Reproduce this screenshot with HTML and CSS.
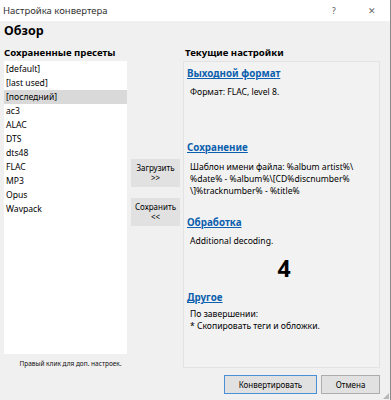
FILE: index.html
```html
<!DOCTYPE html>
<html lang="ru">
<head>
<meta charset="utf-8">
<title>Настройка конвертера</title>
<link rel="stylesheet" href="styles.css">
</head>
<body>
<div class="window">
  <div class="titlebar">
    <span class="title">Настройка конвертера</span>
    <span class="tb-help">?</span>
    <span class="tb-close">✕</span>
  </div>
  <div class="content">
    <div class="page-title">Обзор</div>
    <div class="main">
      <div class="left">
        <div class="col-title">Сохраненные пресеты</div>
        <ul class="list">
          <li>[default]</li>
          <li>[last used]</li>
          <li class="sel">[последний]</li>
          <li>ac3</li>
          <li>ALAC</li>
          <li>DTS</li>
          <li>dts48</li>
          <li>FLAC</li>
          <li>MP3</li>
          <li>Opus</li>
          <li>Wavpack</li>
        </ul>
        <div class="hint">Правый клик для доп. настроек.</div>
      </div>
      <div class="mid">
        <button class="btn mbtn load">Загрузить<br>&gt;&gt;</button>
        <button class="btn mbtn save">Сохранить<br>&lt;&lt;</button>
      </div>
      <div class="right">
        <div class="col-title rtitle">Текущие настройки</div>
        <div class="panel">
          <a class="sec h-format">Выходной формат</a>
          <p class="txt t-format">Формат: FLAC, level 8.</p>
          <a class="sec h-save">Сохранение</a>
          <p class="txt t-save">Шаблон имени файла: %album artist%\<br>%date% - %album%\[CD%discnumber%<br>\]%tracknumber% - %title%</p>
          <a class="sec h-proc">Обработка</a>
          <p class="txt t-proc">Additional decoding.</p>
          <div class="big">4</div>
          <a class="sec h-other">Другое</a>
          <p class="txt t-other">По завершении:<br>* Скопировать теги и обложки.</p>
        </div>
      </div>
    </div>
    <div class="footer">
      <button class="btn fbtn default">Конвертировать</button>
      <button class="btn fbtn cancel">Отмена</button>
    </div>
    <div class="grip"></div>
  </div>
</div>
</body>
</html>
```
FILE: styles.css
```css
* { box-sizing: border-box; }
html, body { margin: 0; padding: 0; }
body {
  width: 391px;
  height: 400px;
  overflow: hidden;
  font-family: "Noto Sans", "Open Sans", sans-serif;
  font-size: 9px;
  color: #000;
  background: #f0f0f0;
}
.window {
  width: 391px;
  height: 400px;
  border-right: 1px solid #8a8a8a;
  display: flex;
  flex-direction: column;
}
.titlebar {
  height: 21px;
  background: #fff;
  display: flex;
  align-items: center;
  padding-left: 3px;
  font-size: 9.5px;
  color: #333;
  white-space: nowrap;
}
.title { flex: 1; }
.tb-help { width: 10px; margin-right: 26px; color: #555; font-size: 8.5px; }
.tb-close { width: 10px; margin-right: 12px; color: #666; font-size: 8.5px; }
.content {
  flex: 1;
  background: #f0f0f0;
  position: relative;
  padding: 0 0 0 4px;
}
.page-title {
  height: 21px;
  line-height: 20px;
  font-weight: bold;
  font-size: 12.5px;
}
.main {
  display: flex;
  margin-top: 4px;
}
.col-title {
  height: 15px;
  line-height: 14px;
  font-weight: bold;
  font-size: 9.6px;
  white-space: nowrap;
}
.left { width: 123px; }
.list {
  list-style: none;
  margin: 0;
  padding: 1px 0 0;
  height: 293px;
  background: #fff;
}
.list li {
  height: 14px;
  line-height: 14px;
  padding-left: 2px;
  font-size: 8.6px;
}
.list li.sel { background: #d9d9d9; }
.hint {
  text-align: center;
  font-size: 6.5px;
  margin-top: 5px;
  padding-left: 10px;
  color: #111;
  white-space: nowrap;
}
.mid {
  width: 56px;
  display: flex;
  flex-direction: column;
  align-items: flex-start;
  padding-left: 4px;
  padding-top: 113px;
}
.btn {
  font-family: inherit;
  background: #e1e1e1;
  border: 1px solid #e1e1e1;
  color: #000;
  padding: 0;
  margin: 0;
  white-space: nowrap;
}
.mbtn {
  width: 49px;
  height: 28px;
  font-size: 8px;
  line-height: 10px;
}
.mbtn.save { margin-top: 11px; }
.right { width: 197px; }
.rtitle { padding-left: 2px; }
.panel {
  height: 307px;
  border: 1px solid #e3e3e3;
  background: #f2f2f2;
  padding-left: 3px;
  display: flex;
  flex-direction: column;
  align-items: flex-start;
}
.sec {
  display: block;
  color: #0b5fae;
  font-weight: bold;
  font-size: 9.8px;
  line-height: 14px;
  height: 14px;
  text-decoration: underline;
}
.txt {
  margin: 0;
  padding-left: 3px;
  font-size: 8.6px;
  line-height: 12px;
  white-space: nowrap;
}
.h-format { margin-top: 5px; }
.t-format { margin-top: 5px; }
.h-save { margin-top: 43px; }
.t-save { margin-top: 6px; }
.h-proc { margin-top: 19px; }
.t-proc { margin-top: 5px; }
.big {
  margin-top: 9px;
  height: 24px;
  line-height: 24px;
  font-size: 23px;
  font-weight: bold;
  align-self: stretch;
  text-align: center;
  padding-left: 2px;
}
.h-other { margin-top: 11px; }
.t-other { margin-top: 3px; }
.footer {
  display: flex;
  justify-content: flex-end;
  gap: 4px;
  padding-right: 10px;
  margin-top: 7px;
}
.fbtn {
  height: 19px;
  font-size: 8px;
  border-color: #adadad;
}
.fbtn.default { width: 93px; border-color: #4a90d6; }
.fbtn.cancel { width: 59px; }
.grip {
  position: absolute;
  right: 1px;
  bottom: 1px;
  width: 6px;
  height: 6px;
  background-image: radial-gradient(circle, #b8b8b8 0.8px, transparent 1px);
  background-size: 2px 2px;
  clip-path: polygon(100% 0, 100% 100%, 0 100%);
}
```
